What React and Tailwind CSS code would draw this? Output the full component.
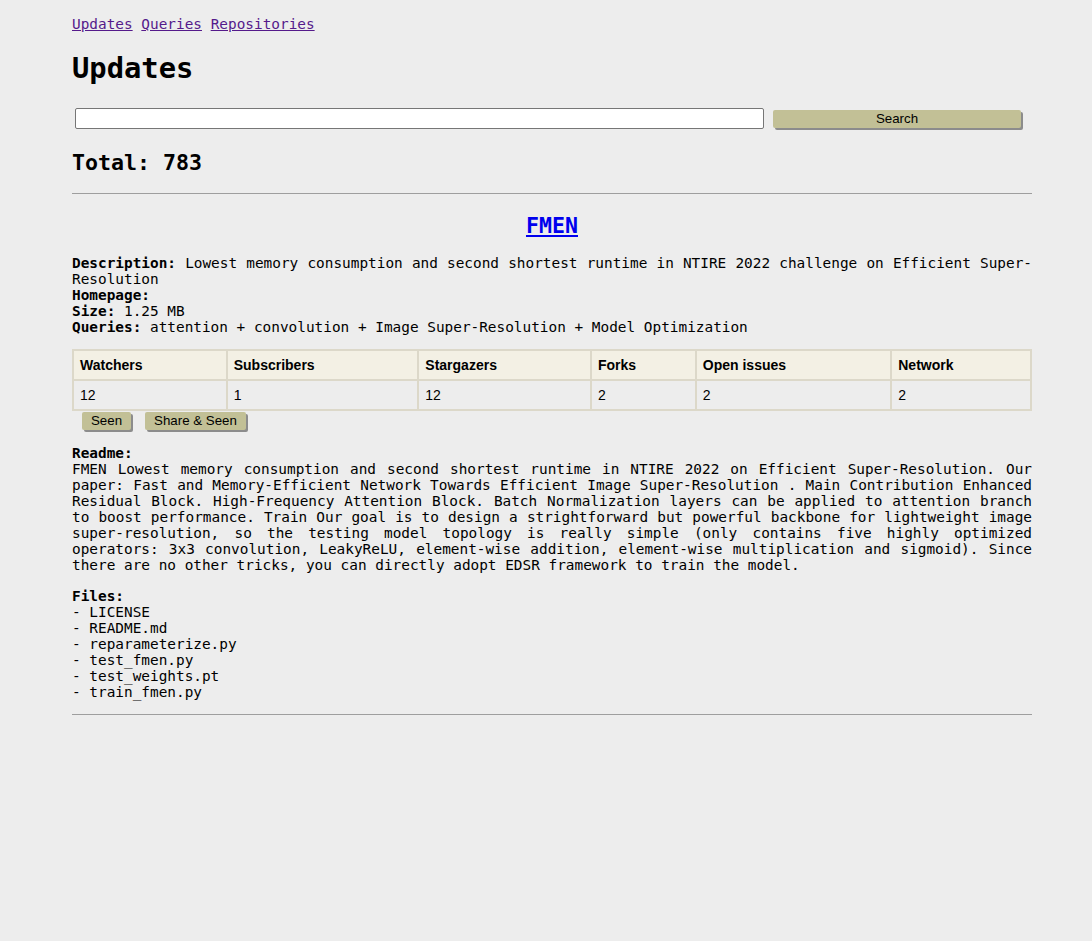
import React, { useState } from "react";

const mono = { fontFamily: '"DejaVu Sans Mono", monospace' };

const stats = [
  { label: "Watchers", value: "12", w: "w-[154px]" },
  { label: "Subscribers", value: "1", w: "w-[192px]" },
  { label: "Stargazers", value: "12", w: "w-[173px]" },
  { label: "Forks", value: "2", w: "w-[105px]" },
  { label: "Open issues", value: "2", w: "w-[196px]" },
  { label: "Network", value: "2", w: "w-[140px]" },
];

const files = [
  "LICENSE",
  "README.md",
  "reparameterize.py",
  "test_fmen.py",
  "test_weights.pt",
  "train_fmen.py",
];

const readme =
  "FMEN Lowest memory consumption and second shortest runtime in NTIRE 2022 on Efficient Super-Resolution. Our paper: Fast and Memory-Efficient Network Towards Efficient Image Super-Resolution . Main Contribution Enhanced Residual Block. High-Frequency Attention Block. Batch Normalization layers can be applied to attention branch to boost performance. Train Our goal is to design a strightforward but powerful backbone for lightweight image super-resolution, so the testing model topology is really simple (only contains five highly optimized operators: 3x3 convolution, LeakyReLU, element-wise addition, element-wise multiplication and sigmoid). Since there are no other tricks, you can directly adopt EDSR framework to train the model.";

// 올리브색 버튼 (원본 페이지 스타일)
const OliveButton = ({ children, className = "" }) => (
  <button
    type="button"
    className={`h-[18px] bg-[#c2c096] text-[13.3px] leading-[18px] text-black rounded-[2px] shadow-[2px_2px_0_#8c8c8c] ${className}`}
    style={{ fontFamily: '"Liberation Sans", Arial, sans-serif' }}
  >
    {children}
  </button>
);

export default function App() {
  const [query, setQuery] = useState("");

  return (
    <div
      className="min-h-screen bg-[#ededed] text-black text-[14.4px] leading-[16px]"
      style={mono}
    >
      <div className="ml-[72px] w-[960px] pt-4 text-justify">
        {/* --- 상단 네비게이션 --- */}
        <nav className="h-4 text-[#551a8b]">
          <a href="#" className="underline">Updates</a>{" "}
          <a href="#" className="underline">Queries</a>{" "}
          <a href="#" className="underline">Repositories</a>
        </nav>

        <h1 className="mt-[19px] text-[28.8px] leading-[34px] font-bold">
          Updates
        </h1>

        {/* --- 검색 폼 --- */}
        <form
          className="mt-[23px] flex items-start h-[21px]"
          onSubmit={(e) => e.preventDefault()}
        >
          <input
            type="text"
            value={query}
            onChange={(e) => setQuery(e.target.value)}
            className="ml-[3px] w-[689px] h-[21px] bg-white border border-[#767676] rounded-[2px] px-1 outline-none"
          />
          <OliveButton className="ml-[9px] w-[248px] mt-[2px]">Search</OliveButton>
        </form>

        <h2 className="mt-[21px] text-[21.6px] leading-[26px] font-bold">
          Total: 783
        </h2>

        <hr className="mt-[17px] border-0 border-t border-[#9e9e9e]" />

        {/* --- 저장소 항목 --- */}
        <h2 className="mt-[19px] text-center text-[21.6px] leading-[26px] font-bold">
          <a href="#" className="text-[#0000ee] underline">FMEN</a>
        </h2>

        <div className="mt-[16px]">
          <div>
            <b>Description:</b> Lowest memory consumption and second shortest
            runtime in NTIRE 2022 challenge on Efficient Super-Resolution
          </div>
          <div>
            <b>Homepage:</b>
          </div>
          <div>
            <b>Size:</b> 1.25 MB
          </div>
          <div>
            <b>Queries:</b> attention + convolution + Image Super-Resolution +
            Model Optimization
          </div>
        </div>

        <table
          className="mt-[14px] w-[960px] border-collapse text-[14px]"
          style={{ fontFamily: '"Liberation Sans", Arial, sans-serif' }}
        >
          <thead>
            <tr className="bg-[#f3f0e4]">
              {stats.map((s) => (
                <th
                  key={s.label}
                  className={`${s.w} h-[30px] border-2 border-[#dcd8c9] px-[6px] text-left font-bold`}
                >
                  {s.label}
                </th>
              ))}
            </tr>
          </thead>
          <tbody>
            <tr>
              {stats.map((s) => (
                <td
                  key={s.label}
                  className="h-[30px] border-2 border-[#dcd8c9] px-[6px] text-left"
                >
                  {s.value}
                </td>
              ))}
            </tr>
          </tbody>
        </table>

        <div className="mt-[1px] flex">
          <OliveButton className="ml-[10px] w-[49px]">Seen</OliveButton>
          <OliveButton className="ml-[14px] w-[101px]">Share &amp; Seen</OliveButton>
        </div>

        <div className="mt-[15px]">
          <b>Readme:</b>
          <p>{readme}</p>
        </div>

        <div className="mt-[15px] text-left">
          <b>Files:</b>
          {files.map((f) => (
            <div key={f}>- {f}</div>
          ))}
        </div>

        <hr className="mt-[14px] border-0 border-t border-[#9e9e9e]" />
      </div>
    </div>
  );
}
